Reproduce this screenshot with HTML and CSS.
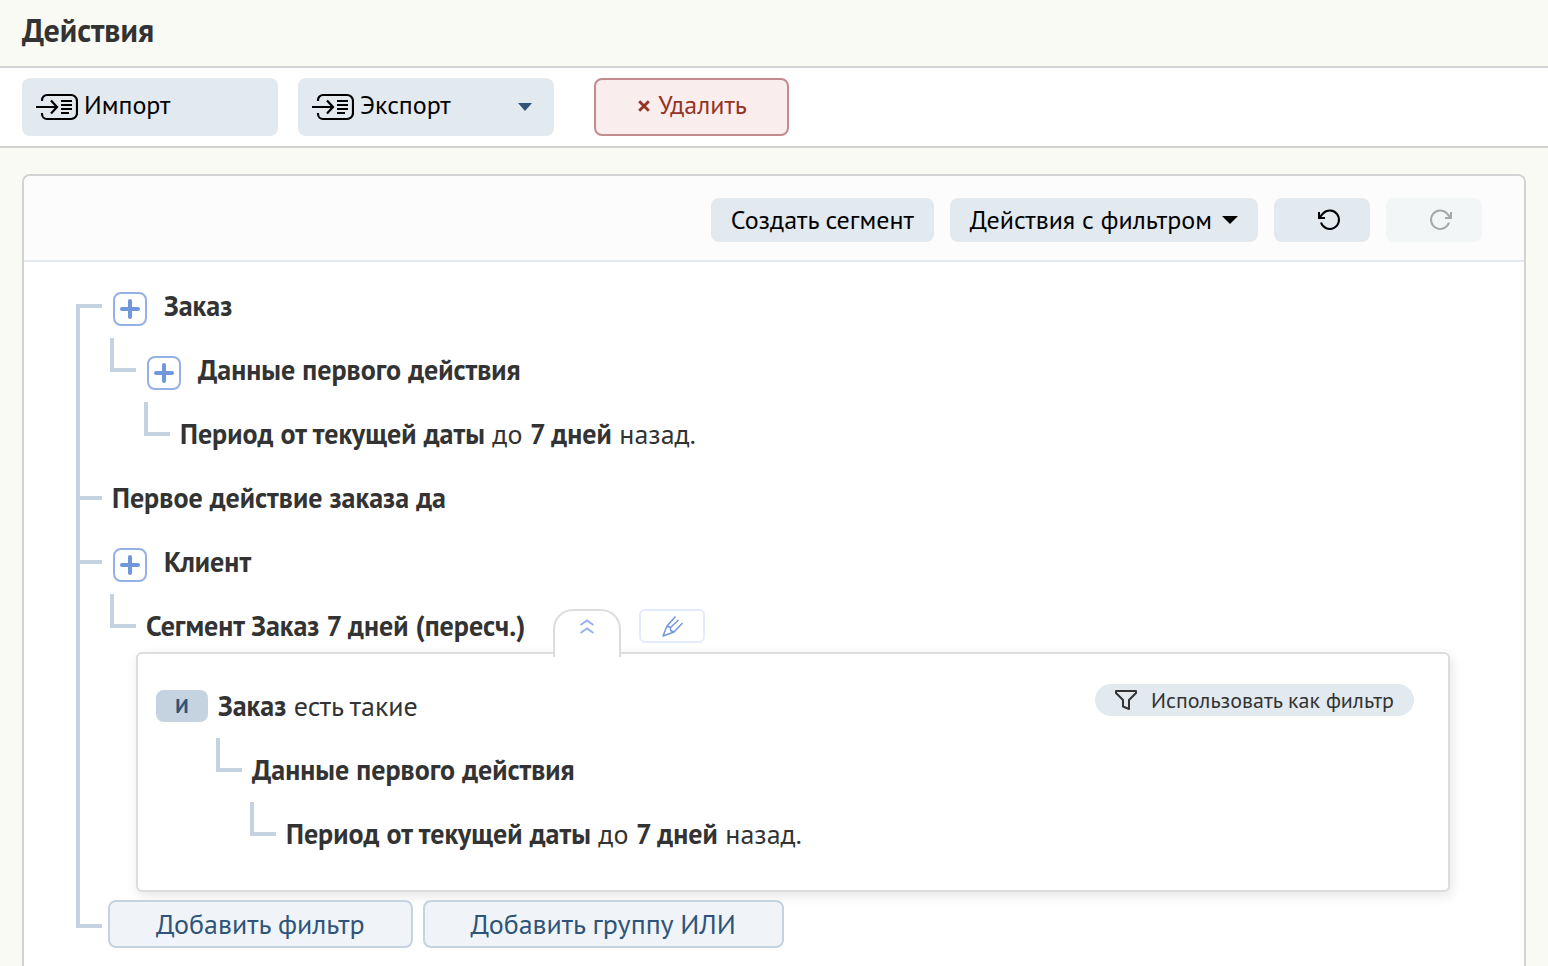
FILE: index.html
```html
<!DOCTYPE html>
<html lang="ru">
<head>
<meta charset="utf-8">
<title>Действия</title>
<link rel="stylesheet" href="styles.css">
</head>
<body>
<svg class="sprite" aria-hidden="true">
  <symbol id="icon-transfer" viewBox="0 0 42 28">
    <path d="M6 8V7a5 5 0 0 1 5-5H35a6 6 0 0 1 6 6V20a6 6 0 0 1-6 6H11a5 5 0 0 1-5-5V20M0 14H20M15 7.500L21 14L15 20.500M25 8H36M25 12H36M25 16H36M25 20H33" fill="none" stroke="currentColor" stroke-width="2.200"/>
  </symbol>
  <symbol id="icon-plus" viewBox="0 0 34 34">
    <path d="M17 9V25M9 17H25" fill="none" stroke="currentColor" stroke-width="4" stroke-linecap="round"/>
  </symbol>
</svg>
<div class="app">
  <header class="app-header">
    <h1 class="title">Действия</h1>
  </header>
  <div class="toolbar">
    <button class="btn btn-tool" type="button"><svg class="icon-transfer"><use href="#icon-transfer"/></svg>Импорт</button>
    <button class="btn btn-tool" type="button"><svg class="icon-transfer"><use href="#icon-transfer"/></svg>Экспорт
      <svg class="caret caret-end" width="14" height="8" viewBox="0 0 14 8"><path d="M0 0H14L7 8Z" fill="currentColor"/></svg></button>
    <button class="btn btn-delete" type="button"><svg width="12" height="12" viewBox="0 0 12 12"><path d="M1.200 1.200L10.800 10.800M10.800 1.200L1.200 10.800" stroke="currentColor" stroke-width="2.800"/></svg>Удалить</button>
  </div>
  <main class="content">
    <section class="panel">
      <div class="panel-header">
        <button class="btn btn-panel" type="button">Создать сегмент</button>
        <button class="btn btn-panel" type="button">Действия с фильтром
          <svg width="16" height="8" viewBox="0 0 16 8"><path d="M0 0H16L8 8Z" fill="currentColor"/></svg></button>
        <button class="btn btn-history" type="button" aria-label="Отменить">
          <svg width="24" height="22" viewBox="0 0 24 22" fill="none" stroke="currentColor" stroke-width="2"><path d="M2 3V9H8M2.500 8.500L6 4.500A9.200 9.200 0 1 1 4 13.500"/></svg></button>
        <button class="btn btn-history" type="button" aria-label="Повторить" disabled>
          <svg width="24" height="22" viewBox="0 0 24 22" fill="none" stroke="currentColor" stroke-width="2"><path d="M22 3V9H16M21.500 8.500L18 4.500A9.200 9.200 0 1 0 20 13.500"/></svg></button>
      </div>
      <ul class="tree">
        <li class="node">
          <div class="row"><button class="expand" type="button" aria-label="Развернуть"><svg><use href="#icon-plus"/></svg></button><b>Заказ</b></div>
          <ul class="branch">
            <li class="node">
              <div class="row"><button class="expand" type="button" aria-label="Развернуть"><svg><use href="#icon-plus"/></svg></button><b>Данные первого действия</b></div>
              <ul class="branch">
                <li class="node"><div class="row"><p><b>Период от текущей даты</b> до <b>7 дней</b> назад.</p></div></li>
              </ul>
            </li>
          </ul>
        </li>
        <li class="node"><div class="row"><b>Первое действие заказа да</b></div></li>
        <li class="node">
          <div class="row"><button class="expand" type="button" aria-label="Развернуть"><svg><use href="#icon-plus"/></svg></button><b>Клиент</b></div>
          <ul class="branch">
            <li class="node">
              <div class="row row-segment"><b>Сегмент Заказ 7 дней (пересч.)</b>
                <button class="tab" type="button" aria-label="Свернуть"><svg width="14" height="16" viewBox="0 0 14 16"><path d="M0.500 6L7 1.500L13.500 6M0.500 14L7 9.500L13.500 14" fill="none" stroke="currentColor" stroke-width="2"/></svg></button>
                <button class="edit" type="button" aria-label="Изменить"><svg width="21" height="21" viewBox="0 0 21 21" fill="none" stroke="currentColor" stroke-width="1.500" stroke-linejoin="round"><path d="M13.500 0.500L5 10L1 20L12 16L20.500 7M5 10L8.500 11.500L8.500 14.500L12 16M8.500 11.500L16.500 4"/></svg></button>
              </div>
              <div class="segment">
                <div class="row">
                  <span class="badge">И</span>
                  <p><b>Заказ</b> есть такие</p>
                  <button class="use-filter" type="button"><svg width="22" height="20" viewBox="0 0 22 20"><path d="M1 1H21V3L14 10V19L8 16.500V10L1 3Z" fill="none" stroke="currentColor" stroke-width="2" stroke-linejoin="round"/></svg>Использовать как фильтр</button>
                </div>
                <ul class="branch branch-segment">
                  <li class="node">
                    <div class="row"><b>Данные первого действия</b></div>
                    <ul class="branch">
                      <li class="node"><div class="row"><p><b>Период от текущей даты</b> до <b>7 дней</b> назад.</p></div></li>
                    </ul>
                  </li>
                </ul>
              </div>
            </li>
          </ul>
        </li>
        <li class="node node-actions">
          <button class="btn-add" type="button">Добавить фильтр</button>
          <button class="btn-add" type="button">Добавить группу ИЛИ</button>
        </li>
      </ul>
    </section>
  </main>
</div>
</body>
</html>
```
FILE: styles.css
```css
:root {
  --line: #c5d2e0;
  --fill: #e2e9ef;
  --border: #d3d3d3;
  --blue: #7096db;
  --navy: #2f547a;
  --text: #333;
}

* {
  box-sizing: border-box;
}

body {
  margin: 0;
  background: #fafaf5;
  color: var(--text);
  font: 28px/36px "PT Sans", "Noto Sans", sans-serif;
}

button {
  margin: 0;
  padding: 0;
  border: 0;
  font: inherit;
  white-space: nowrap;
  cursor: pointer;
}

svg {
  display: block;
  flex: none;
}

ul {
  margin: 0;
  padding: 0;
  list-style: none;
}

p {
  margin: 0;
}

.sprite {
  position: absolute;
  width: 0;
  height: 0;
}

.app {
  display: flex;
  flex-direction: column;
  height: 100vh;
  overflow: hidden;
}

.app-header {
  padding: 10px 22px 16px;
  border-bottom: 2px solid var(--border);
}

.title {
  margin: 0;
  font-size: 32px;
  line-height: 40px;
}

.toolbar {
  display: flex;
  padding: 10px 22px;
  border-bottom: 2px solid var(--border);
  background: #fff;
}

.btn {
  display: flex;
  align-items: center;
  border-radius: 8px;
  background: var(--fill);
  color: #000;
  font-size: 26px;
  line-height: 32px;
}

.btn-tool {
  width: 256px;
  height: 58px;
  margin-right: 20px;
  padding: 0 22px 4px 14px;
  gap: 6px;
}

.icon-transfer {
  width: 42px;
  height: 28px;
  margin-top: 4px;
}

.caret-end {
  margin-left: auto;
  margin-top: 4px;
  color: var(--navy);
}

.btn-delete {
  justify-content: center;
  gap: 8px;
  min-width: 195px;
  height: 58px;
  margin-left: 20px;
  padding: 0 0 4px 2px;
  border: 2px solid #c28b8e;
  background: #faeded;
  color: #943425;
}

.btn-delete svg {
  margin-top: 2px;
}

.content {
  flex: 1;
  padding: 26px 22px 0;
}

.panel {
  height: 100%;
  border: 2px solid var(--border);
  border-bottom: 0;
  border-radius: 8px 8px 0 0;
  background: #fff;
}

.panel-header {
  display: flex;
  justify-content: flex-end;
  gap: 16px;
  padding: 22px 42px 18px;
  border-bottom: 2px solid var(--fill);
  border-radius: 6px 6px 0 0;
  background: #fcfcfc;
}

.btn-panel {
  height: 44px;
  padding: 0 20px;
  gap: 10px;
}

.btn-history {
  justify-content: center;
  width: 96px;
  height: 44px;
  padding-left: 14px;
}

.btn-history:disabled {
  background: #f3f6f7;
  color: #a8a8a8;
  cursor: default;
}

.tree {
  padding: 12px 74px 0 52px;
}

.node {
  padding-left: 34px;
  background:
    linear-gradient(var(--line), var(--line)) 0 0 / 4px 100% no-repeat,
    linear-gradient(var(--line), var(--line)) 0 30px / 26px 4px no-repeat;
}

.node:first-child {
  background-position: 0 30px;
}

.branch > .node {
  background-position: 0 0, 0 30px;
  background-size: 4px 34px, 26px 4px;
}

.row {
  display: flex;
  align-items: center;
  height: 64px;
  padding-left: 2px;
}

.expand {
  width: 34px;
  height: 34px;
  margin: 6px 17px 0 1px;
  border: 2px solid #94b0e7;
  border-radius: 8px;
  background: #fff;
  color: var(--blue);
}

.expand svg {
  width: 34px;
  height: 34px;
  margin: -2px;
}

.row-segment {
  align-items: flex-start;
  padding-top: 15px;
  line-height: 34px;
}

.tab {
  display: flex;
  justify-content: center;
  position: relative;
  z-index: 1;
  width: 68px;
  height: 48px;
  margin-left: 28px;
  padding-top: 8px;
  border: 2px solid #ddd;
  border-bottom: 0;
  border-radius: 20px 20px 0 0;
  background: #fff;
  color: #94b0e7;
}

.edit {
  display: flex;
  align-items: center;
  justify-content: center;
  width: 66px;
  height: 34px;
  margin-left: 18px;
  border: 2px solid #e2ecfd;
  border-radius: 6px;
  background: #fff;
  color: var(--blue);
}

.segment {
  margin: -6px 0 0 -8px;
  padding: 20px 34px 24px 16px;
  border: 2px solid #ddd;
  border-radius: 6px;
  background: #fff;
  box-shadow: 2px 4px 12px rgba(0, 0, 0, 0.1);
}

.badge {
  width: 52px;
  height: 32px;
  margin-right: 10px;
  border-radius: 8px;
  background: var(--line);
  color: var(--navy);
  font-size: 20px;
  font-weight: 700;
  line-height: 32px;
  text-align: center;
}

.use-filter {
  display: flex;
  align-items: center;
  align-self: flex-start;
  gap: 14px;
  height: 32px;
  margin: 10px 0 0 auto;
  padding: 0 20px;
  border-radius: 16px;
  background: var(--fill);
  color: var(--text);
  font-size: 22px;
  line-height: 28px;
}

.branch-segment {
  margin-left: 62px;
}

.node-actions {
  display: flex;
  gap: 10px;
  padding: 8px 0 18px 32px;
}

.tree > .node-actions {
  background-position: 0 0, 0 32px;
  background-size: 4px 36px, 26px 4px;
}

.btn-add {
  height: 48px;
  padding: 0 46px;
  border: 2px solid var(--line);
  border-radius: 8px;
  background: #f0f4f8;
  color: var(--navy);
}
```
